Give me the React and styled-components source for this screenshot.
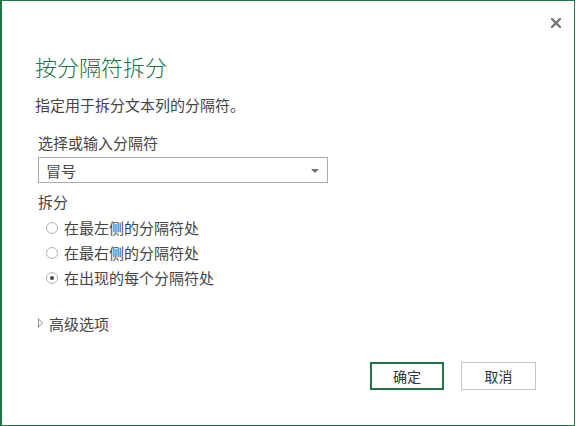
import React, { useState } from 'react';
import styled, { createGlobalStyle } from 'styled-components';

const GlobalStyle = createGlobalStyle`
  html, body {
    margin: 0;
    padding: 0;
    background: #ffffff;
  }
  body {
    font-family: "Noto Sans CJK SC", "Noto Sans", "Liberation Sans", sans-serif;
    color: #444444;
  }
`

const Dialog = styled.div`
  position: relative;
  box-sizing: border-box;
  width: 575px;
  height: 426px;
  background: #ffffff;
  border: 1px solid #217346;
  border-left-width: 2px;
  display: flex;
  flex-direction: column;
`

const CloseButton = styled.button`
  position: absolute;
  top: 14px;
  right: 10px;
  width: 16px;
  height: 16px;
  padding: 0;
  border: none;
  background: transparent;
  display: flex;
  align-items: center;
  justify-content: center;
  cursor: pointer;
`

const Content = styled.div`
  padding-left: 33px;
  display: flex;
  flex-direction: column;
`

const Title = styled.h1`
  margin: 52px 0 0 0;
  font-size: 22px;
  line-height: 26px;
  font-weight: 300;
  color: #217346;
`

const Subtitle = styled.p`
  margin: 16px 0 0 0;
  font-size: 15px;
  line-height: 20px;
`

const Form = styled.div`
  padding-left: 3px;
  display: flex;
  flex-direction: column;
  align-items: flex-start;
`

const Label = styled.div`
  margin-top: ${p => p.$top}px;
  font-size: 15px;
  line-height: 20px;
`

const Select = styled.div`
  margin-top: 4px;
  box-sizing: border-box;
  width: 290px;
  height: 26px;
  border: 1px solid #ababab;
  display: flex;
  align-items: center;
  justify-content: space-between;
  padding: 0 8px 0 7px;
  font-size: 15px;
`

const Arrow = styled.span`
  width: 0;
  height: 0;
  border-left: 4px solid transparent;
  border-right: 4px solid transparent;
  border-top: 4px solid #707070;
  margin-top: 1px;
`

const RadioList = styled.div`
  margin-top: 3px;
  display: flex;
  flex-direction: column;
`

const RadioRow = styled.label`
  height: 25px;
  display: flex;
  align-items: center;
  gap: 6px;
  padding-left: 8px;
  font-size: 15px;
  cursor: pointer;
`

const RadioCircle = styled.span`
  box-sizing: border-box;
  width: 12px;
  height: 12px;
  border-radius: 50%;
  border: 1px solid #b4b4b4;
  display: flex;
  align-items: center;
  justify-content: center;
  &::after {
    content: "";
    width: 4px;
    height: 4px;
    border-radius: 50%;
    background: ${p => (p.$checked ? '#444444' : 'transparent')};
  }
`

const Advanced = styled.div`
  margin-top: 23px;
  height: 20px;
  display: flex;
  align-items: center;
  gap: 6px;
  font-size: 15px;
  cursor: pointer;
`

const Caret = styled.span`
  width: 0;
  height: 0;
  border-top: 5px solid transparent;
  border-bottom: 5px solid transparent;
  border-left: 5px solid #8a8a8a;
  position: relative;
  &::after {
    content: "";
    position: absolute;
    left: -4px;
    top: -3px;
    border-top: 3px solid transparent;
    border-bottom: 3px solid transparent;
    border-left: 3px solid #ffffff;
  }
`

const Footer = styled.div`
  margin-top: auto;
  padding: 0 38px 35px 0;
  display: flex;
  justify-content: flex-end;
  gap: 17px;
`

const Button = styled.button`
  box-sizing: border-box;
  width: ${p => p.$width}px;
  height: 28px;
  background: #ffffff;
  border: 1px solid ${p => (p.$primary ? '#217346' : '#c6c6c6')};
  box-shadow: ${p => (p.$primary ? 'inset 0 0 0 1px #217346' : 'none')};
  font-family: inherit;
  font-size: 14px;
  color: #333333;
  padding: 0;
  cursor: pointer;
`

const options = ['在最左侧的分隔符处', '在最右侧的分隔符处', '在出现的每个分隔符处'];

export default function App() {
  const [choice, setChoice] = useState(2);

  return (
    <>
      <GlobalStyle />
      <Dialog>
        <CloseButton aria-label="关闭">
          <svg width="10" height="10" viewBox="0 0 10 10">
            <path d="M1 1 L9 9 M9 1 L1 9" stroke="#777777" strokeWidth="2.4" strokeLinecap="square" />
          </svg>
        </CloseButton>
        <Content>
          <Title>按分隔符拆分</Title>
          <Subtitle>指定用于拆分文本列的分隔符。</Subtitle>
          <Form>
            <Label $top={18}>选择或输入分隔符</Label>
            <Select>
              <span>冒号</span>
              <Arrow />
            </Select>
            <Label $top={9}>拆分</Label>
            <RadioList>
              {options.map((text, i) => (
                <RadioRow key={text} onClick={() => setChoice(i)}>
                  <RadioCircle $checked={choice === i} />
                  {text}
                </RadioRow>
              ))}
            </RadioList>
            <Advanced>
              <Caret />
              高级选项
            </Advanced>
          </Form>
        </Content>
        <Footer>
          <Button $primary $width={74}>确定</Button>
          <Button $width={75}>取消</Button>
        </Footer>
      </Dialog>
    </>
  );
}
